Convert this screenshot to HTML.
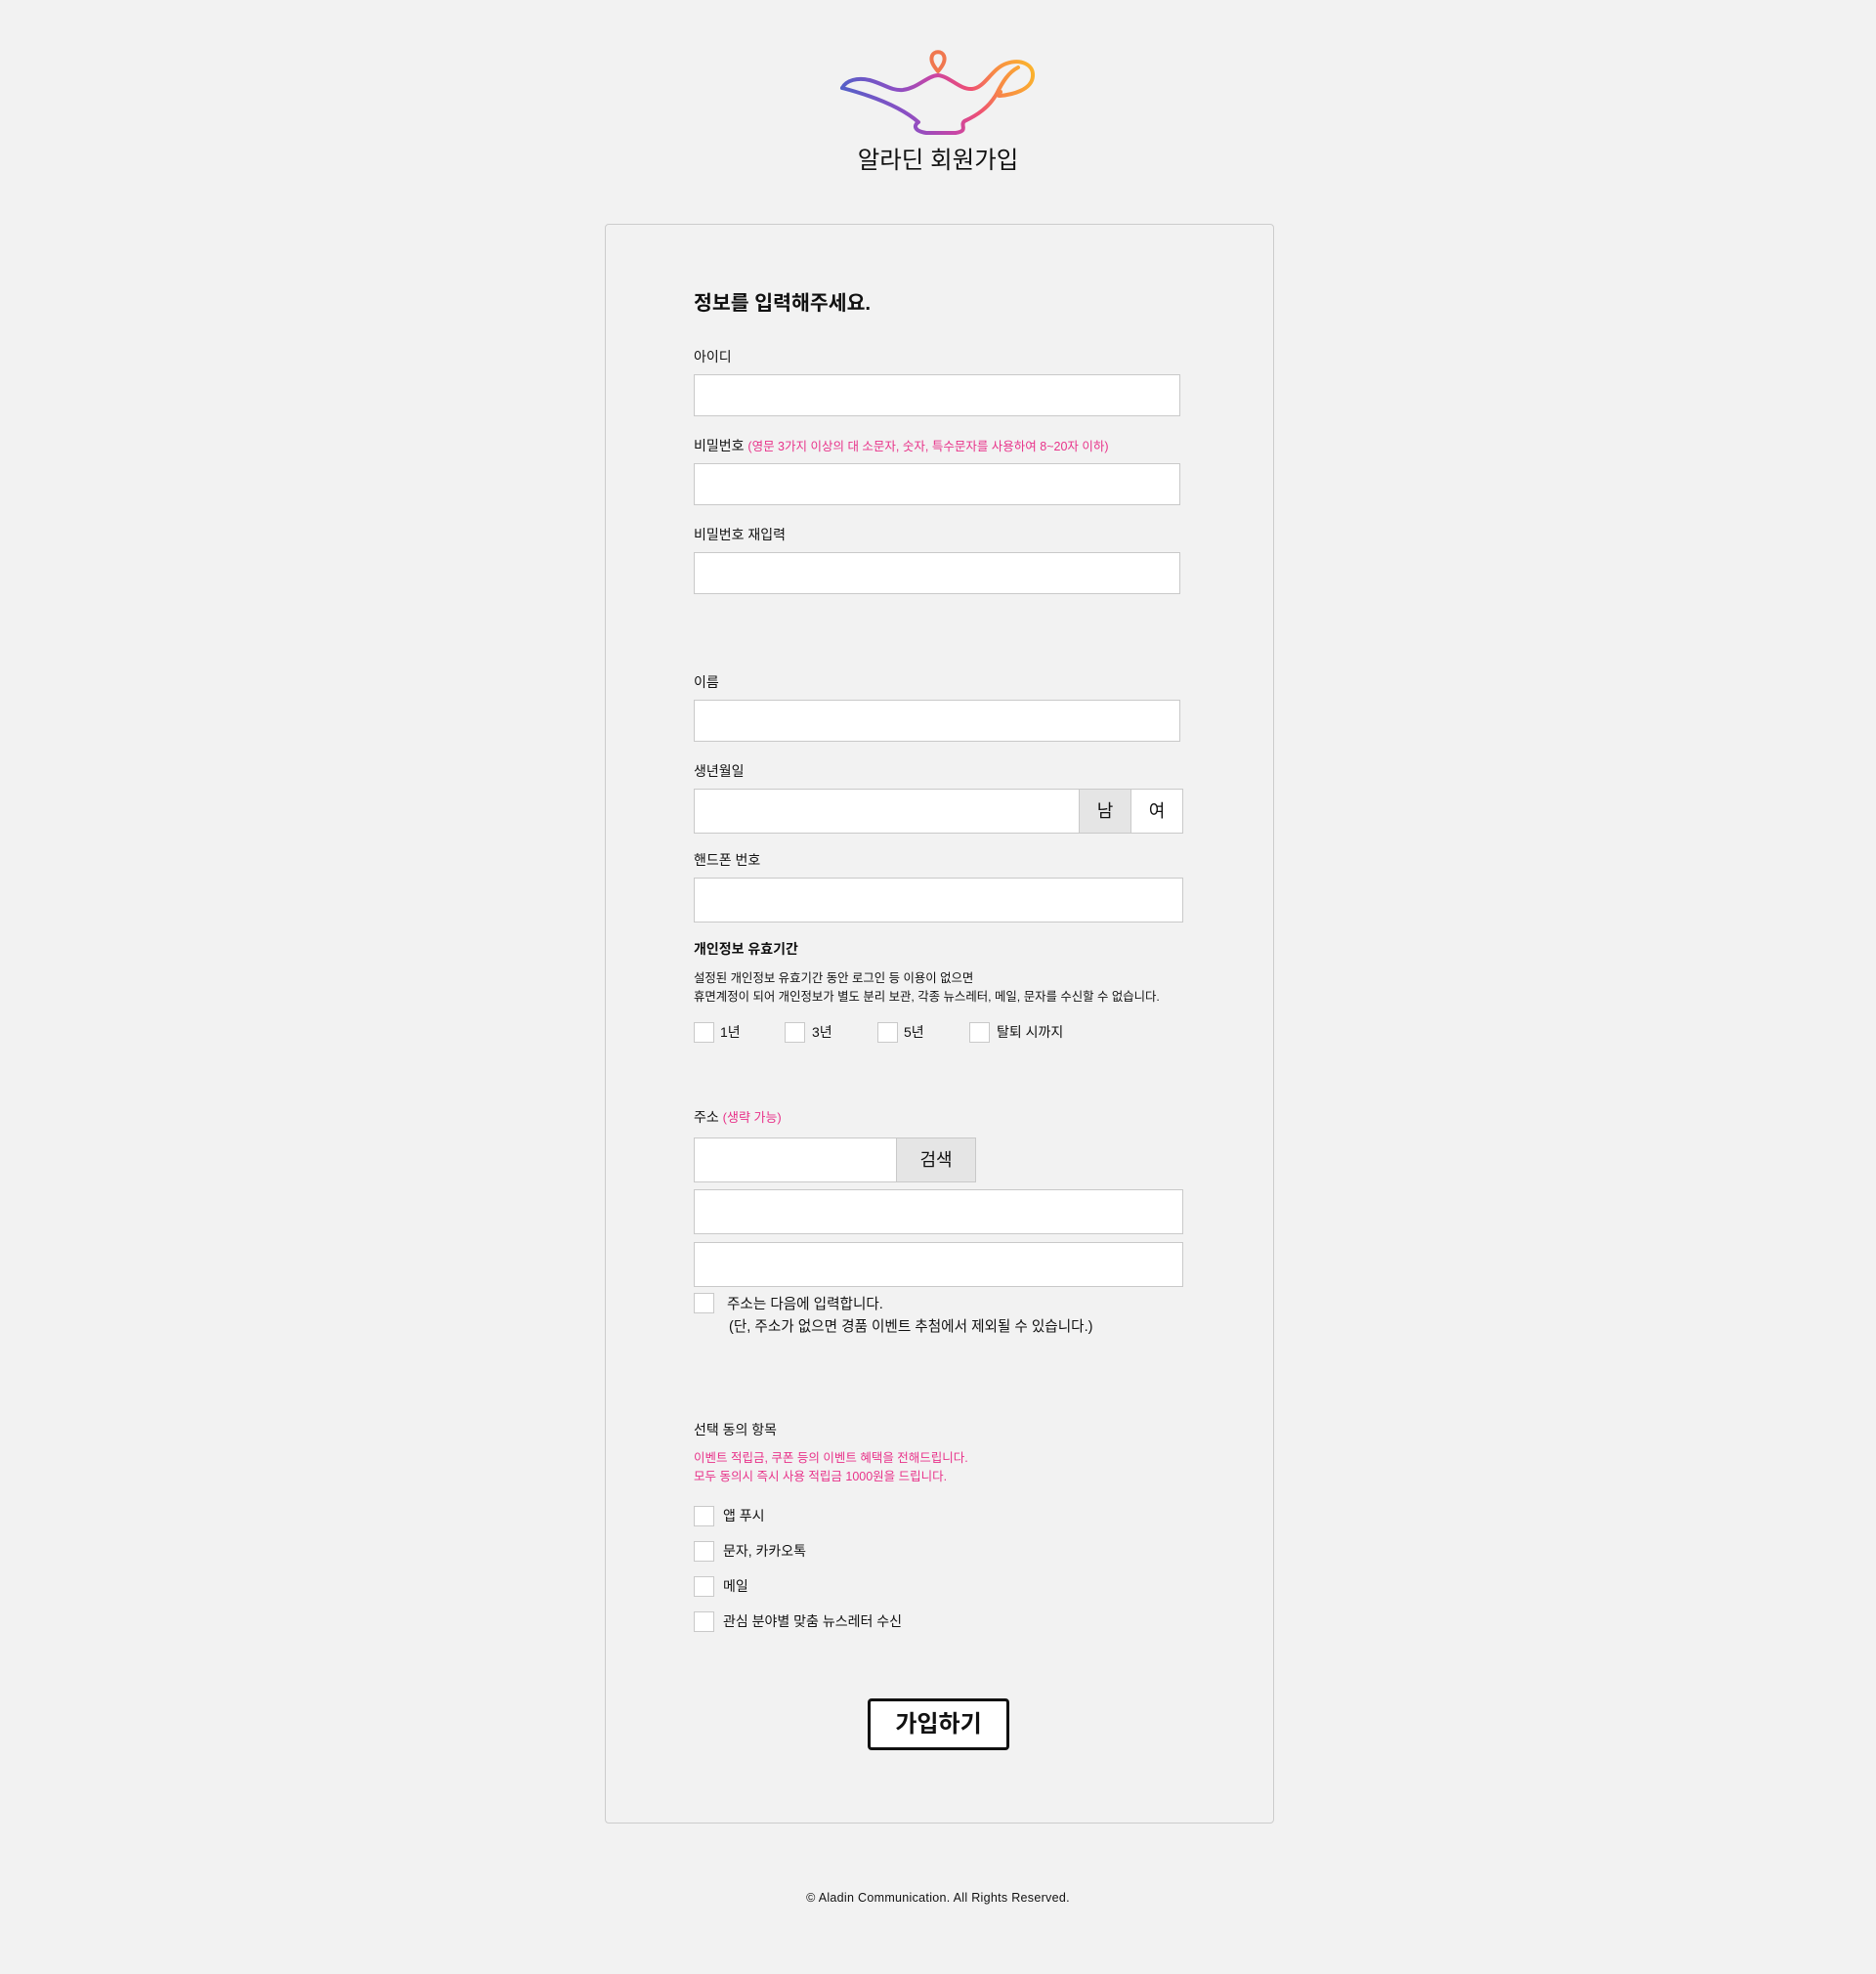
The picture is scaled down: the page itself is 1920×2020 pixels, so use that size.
<!DOCTYPE html>
<html lang="ko"><head><meta charset="utf-8">
<style>
*{box-sizing:border-box;margin:0;padding:0}
html,body{width:1920px;height:2020px;background:#f2f2f2;overflow:hidden}
body{position:relative;font-family:"Liberation Sans","Noto Sans CJK KR",sans-serif;color:#111}
.a{position:absolute;white-space:nowrap}
.card{position:absolute;left:619px;top:229px;width:685px;height:1637px;border:1px solid #ccc;border-radius:4px;background:#f2f2f2}
.lbl{position:absolute;left:710px;font-size:14px;line-height:18px;color:#111}
.in{position:absolute;left:710px;width:498px;height:43px;background:#fff;border:1px solid #c9c9c9}
.cb{position:absolute;width:21px;height:21px;background:#fff;border:1px solid #c9c9c9}
.pk{color:#e8338a}
.t{position:absolute;font-size:14px;line-height:18px}
</style></head><body>
<svg class="a" style="left:855px;top:45px" width="210" height="100" viewBox="855 45 210 100">
<defs><linearGradient id="g" x1="870" y1="135" x2="1055" y2="60" gradientUnits="userSpaceOnUse">
<stop offset="0" stop-color="#4a63c8"/><stop offset="0.3" stop-color="#8a4fc4"/><stop offset="0.5" stop-color="#c845a6"/><stop offset="0.65" stop-color="#ee4f74"/><stop offset="0.8" stop-color="#f88a45"/><stop offset="1" stop-color="#fbb52c"/></linearGradient></defs>
<g fill="none" stroke="url(#g)" stroke-width="4" stroke-linecap="round" stroke-linejoin="round">
<path d="M862 90 C866 82 878 79 890 82 C905 86 912 93 924 92 C940 90 948 78 960 77 C972 78 982 92 995 91 C1008 90 1015 70 1030 65 C1045 60 1058 66 1057 78 C1056 92 1036 97 1023 98 C1020 98 1020 95 1024 94"/>
<path d="M862 90 C900 100 925 112 940 125 C935 128 935 134 948 136 L978 136 C992 134 982 128 987 124 C1000 118 1012 110 1020 96 C1026 84 1032 74 1042 69"/>
<path d="M960 73 C955 67 952 62 954 57 C956 52 964 52 966 57 C968 62 965 67 960 73 Z" stroke="#f0774f"/>
</g></svg>
<div class="a" style="left:0;width:1920px;text-align:center;top:149px;font-size:24.5px;line-height:32px">알라딘 회원가입</div>

<div class="card"></div>
<div class="a" style="left:710px;top:298px;font-size:20.5px;font-weight:bold;line-height:26px">정보를 입력해주세요.</div>

<div class="lbl" style="top:356px">아이디</div>
<div class="in" style="top:383px"></div>
<div class="lbl" style="top:447px">비밀번호 <span class="pk" style="font-size:12.5px">(영문 3가지 이상의 대 소문자, 숫자, 특수문자를 사용하여 8~20자 이하)</span></div>
<div class="in" style="top:474px"></div>
<div class="lbl" style="top:538px">비밀번호 재입력</div>
<div class="in" style="top:565px"></div>

<div class="lbl" style="top:689px">이름</div>
<div class="in" style="top:716px"></div>
<div class="lbl" style="top:780px">생년월일</div>
<div class="in" style="top:807px;width:395px;height:46px"></div>
<div class="a" style="left:1104px;top:807px;width:54px;height:46px;background:#e5e5e5;border:1px solid #c9c9c9;text-align:center;line-height:44px;font-size:18px">남</div>
<div class="a" style="left:1157px;top:807px;width:54px;height:46px;background:#fff;border:1px solid #c9c9c9;text-align:center;line-height:44px;font-size:18px">여</div>
<div class="lbl" style="top:871px">핸드폰 번호</div>
<div class="in" style="top:898px;width:501px;height:46px"></div>

<div class="lbl" style="top:962px;font-weight:bold">개인정보 유효기간</div>
<div class="a" style="left:710px;top:992px;font-size:12.4px;line-height:19px">설정된 개인정보 유효기간 동안 로그인 등 이용이 없으면<br>휴면계정이 되어 개인정보가 별도 분리 보관, 각종 뉴스레터, 메일, 문자를 수신할 수 없습니다.</div>
<div class="cb" style="left:710px;top:1046px"></div><div class="t" style="left:737px;top:1047px">1년</div>
<div class="cb" style="left:803px;top:1046px"></div><div class="t" style="left:831px;top:1047px">3년</div>
<div class="cb" style="left:898px;top:1046px"></div><div class="t" style="left:925px;top:1047px">5년</div>
<div class="cb" style="left:992px;top:1046px"></div><div class="t" style="left:1020px;top:1047px">탈퇴 시까지</div>

<div class="lbl" style="top:1134px">주소 <span class="pk" style="font-size:13px">(생략 가능)</span></div>
<div class="in" style="top:1164px;width:209px;height:46px"></div>
<div class="a" style="left:917px;top:1164px;width:82px;height:46px;background:#e5e5e5;border:1px solid #c9c9c9;text-align:center;line-height:44px;font-size:18px">검색</div>
<div class="in" style="top:1217px;width:501px;height:46px"></div>
<div class="in" style="top:1271px;width:501px;height:46px"></div>
<div class="cb" style="left:710px;top:1323px"></div>
<div class="a" style="left:744px;top:1325px;font-size:14.6px;line-height:20px">주소는 다음에 입력합니다.</div>
<div class="a" style="left:746px;top:1348px;font-size:14.6px;line-height:20px">(단, 주소가 없으면 경품 이벤트 추첨에서 제외될 수 있습니다.)</div>

<div class="lbl" style="top:1454px">선택 동의 항목</div>
<div class="a pk" style="left:710px;top:1483px;font-size:12.5px;line-height:19px">이벤트 적립금, 쿠폰 등의 이벤트 혜택을 전해드립니다.<br>모두 동의시 즉시 사용 적립금 1000원을 드립니다.</div>
<div class="cb" style="left:710px;top:1541px"></div><div class="t" style="left:740px;top:1542px">앱 푸시</div>
<div class="cb" style="left:710px;top:1577px"></div><div class="t" style="left:740px;top:1578px">문자, 카카오톡</div>
<div class="cb" style="left:710px;top:1613px"></div><div class="t" style="left:740px;top:1614px">메일</div>
<div class="cb" style="left:710px;top:1649px"></div><div class="t" style="left:740px;top:1650px">관심 분야별 맞춤 뉴스레터 수신</div>

<div class="a" style="left:888px;top:1738px;width:145px;height:53px;background:#fff;border:3px solid #111;border-radius:4px;text-align:center;line-height:47px;font-size:24px;font-weight:bold">가입하기</div>

<div class="a" style="left:0;width:1920px;text-align:center;top:1934px;font-size:12.5px;line-height:16px;letter-spacing:0.3px">© Aladin Communication. All Rights Reserved.</div>
</body></html>
